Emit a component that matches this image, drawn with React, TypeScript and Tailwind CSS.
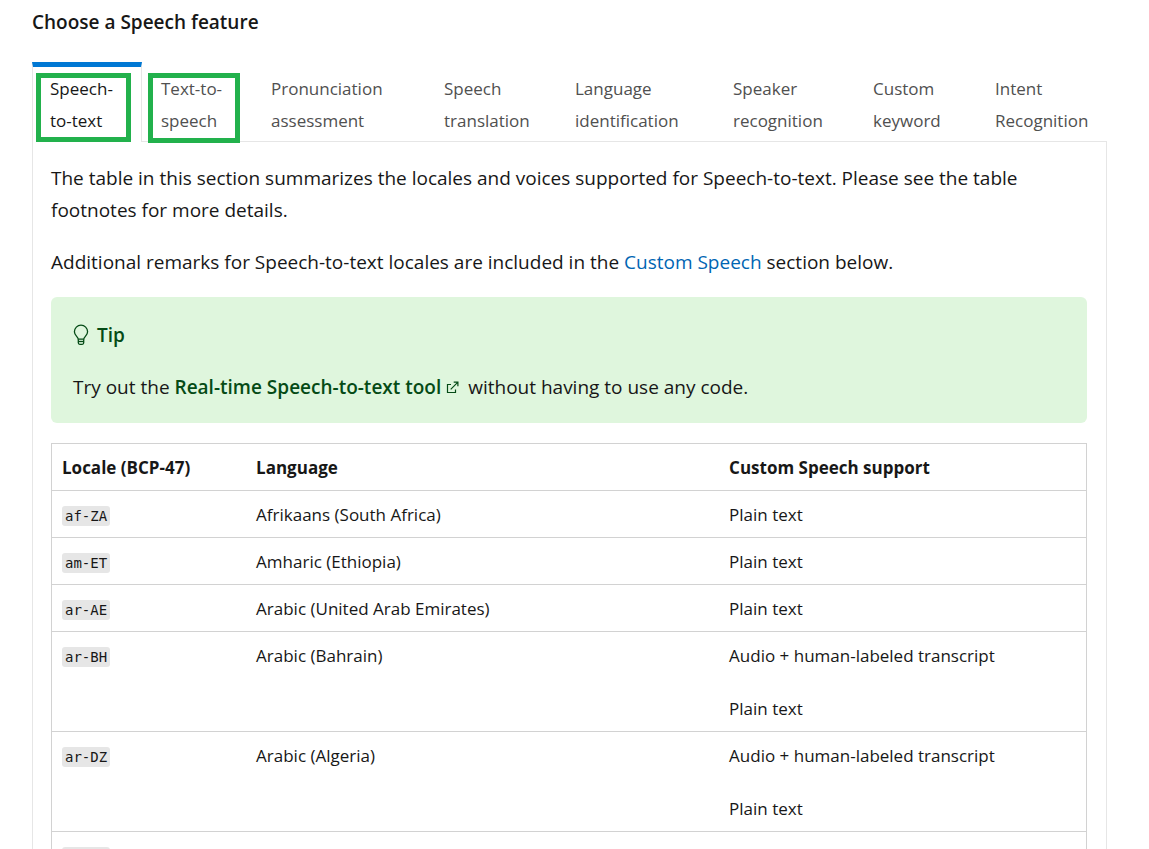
type Locale = { code: string; language: string; support: string[] };

const tabs = [
  'Speech-to-text',
  'Text-to-speech',
  'Pronunciation assessment',
  'Speech translation',
  'Language identification',
  'Speaker recognition',
  'Custom keyword',
  'Intent Recognition',
];

const both = ['Audio + human-labeled transcript', 'Plain text'];

const locales: Locale[] = [
  { code: 'af-ZA', language: 'Afrikaans (South Africa)', support: ['Plain text'] },
  { code: 'am-ET', language: 'Amharic (Ethiopia)', support: ['Plain text'] },
  { code: 'ar-AE', language: 'Arabic (United Arab Emirates)', support: ['Plain text'] },
  { code: 'ar-BH', language: 'Arabic (Bahrain)', support: both },
  { code: 'ar-DZ', language: 'Arabic (Algeria)', support: both },
  { code: 'ar-EG', language: 'Arabic (Egypt)', support: both },
];

function BulbIcon() {
  return (
    <svg aria-hidden="true" width="16" height="22" viewBox="0 0 16 22" fill="none" stroke="currentColor" strokeWidth="1.3">
      <path d="M5.3 15.2C5 12.8 1.4 11.4 1.4 7.8a6.6 6.6 0 0 1 13.2 0c0 3.600-3.600 5-3.900 7.400z" />
      <path d="M5.300 15.200v3.600c0 1 .6 1.500 1.500 1.500h2.400c.9 0 1.500-.5 1.500-1.500v-3.600" />
      <path d="M5.300 17.500h5.400" />
    </svg>
  );
}

function ExternalIcon() {
  return (
    <svg aria-hidden="true" width="13" height="13" viewBox="0 0 13 13" fill="none" stroke="currentColor" strokeWidth="1.2" className="mr-1 ml-[5px] inline-block align-baseline">
      <path d="M5 3.500H1.500v8h8V8.500" />
      <path d="M4.700 8.300 11.700 1.300M7.700 1.100h4.200v4.200" />
    </svg>
  );
}

function TabList() {
  return (
    <div role="tablist" aria-label="Speech feature" className="grid grid-cols-[110fr_110fr_173fr_131fr_158fr_140fr_122fr_131fr] text-[17px] leading-8">
      {tabs.map((label, i) => (
        <button
          key={label}
          type="button"
          role="tab"
          aria-selected={i === 0}
          className={
            i === 0
              ? 'relative z-10 -mb-px border-x border-t-[5px] border-x-[#e6e6e6] border-t-[#0078d4] bg-white pt-1.5 pr-4 pb-[5px] pl-[17px] text-left text-[#171717]'
              : 'relative border-t-[5px] border-transparent pt-1.5 pr-4 pb-1 pl-[19px] text-left text-[#505050]'
          }
        >
          {label}
          {i < 2 && (
            <span
              aria-hidden="true"
              className={
                i === 0
                  ? 'absolute top-1.5 right-2.5 bottom-0 left-[3px] border-[5px] border-[#22b14c]'
                  : 'absolute top-1.5 right-3 -bottom-0.5 left-1.5 border-[5px] border-[#22b14c]'
              }
            />
          )}
        </button>
      ))}
    </div>
  );
}

function LocaleTable() {
  return (
    <table className="mt-5 w-full table-fixed border-collapse border border-[#d2d2d2] text-[17px] leading-7">
      <colgroup>
        <col className="w-[18.8%]" />
        <col className="w-[45.7%]" />
        <col />
      </colgroup>
      <thead>
        <tr className="text-left">
          <th scope="col" className="px-2.5 pt-2.5 pb-2 font-bold">Locale (BCP-47)</th>
          <th scope="col" className="px-2.5 pt-2.5 pb-2 font-bold">Language</th>
          <th scope="col" className="px-2.5 pt-2.5 pb-2 font-bold">Custom Speech support</th>
        </tr>
      </thead>
      <tbody>
        {locales.map((row) => (
          <tr key={row.code} className="border-t border-[#d2d2d2] align-top">
            <td className="px-2.5 pt-2.5 pb-2">
              <code className="rounded-[3px] bg-[#e6e6e6] px-[3px] py-0.5 font-['DejaVu_Sans_Mono',monospace] text-[14px] leading-5">{row.code}</code>
            </td>
            <td className="px-2.5 pt-2.5 pb-2">{row.language}</td>
            <td className="space-y-[25px] px-2.5 pt-2.5 pb-2">
              {row.support.map((s) => (
                <p key={s}>{s}</p>
              ))}
            </td>
          </tr>
        ))}
      </tbody>
    </table>
  );
}

export default function App() {
  return (
    <main className="h-screen overflow-hidden bg-white pt-1.5 pr-[42px] pl-8 font-['Open_Sans','Noto_Sans',sans-serif] text-[19px] leading-8 text-[#171717]">
      <h2 className="mb-6 text-[19px] font-semibold">Choose a Speech feature</h2>
      <TabList />
      <section role="tabpanel" aria-label="Speech-to-text" className="border border-[#e6e6e6] pt-5 pr-[19px] pb-5 pl-[18px]">
        <p>
          The table in this section summarizes the locales and voices supported for Speech-to-text. Please see the table
          footnotes for more details.
        </p>
        <p className="mt-5">
          Additional remarks for Speech-to-text locales are included in the{' '}
          <a href="#custom-speech" className="text-[#0065b3]">Custom Speech</a> section below.
        </p>
        <aside className="mt-[19px] rounded-md bg-[#dff6dd] px-[22px] pt-[22px] pb-5">
          <p className="flex items-center gap-2 font-semibold text-[#054b16]">
            <BulbIcon />
            Tip
          </p>
          <p className="mt-5">
            Try out the{' '}
            <a href="#speech-studio" className="font-semibold text-[#054b16]">
              Real-time Speech-to-text tool
              <ExternalIcon />
            </a>{' '}
            without having to use any code.
          </p>
        </aside>
        <LocaleTable />
      </section>
    </main>
  );
}
